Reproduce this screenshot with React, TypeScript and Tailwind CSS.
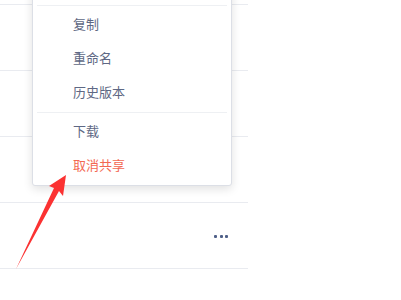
import React from 'react';

const rows = [0, 1, 2, 3, 4];

const MenuItem = ({ label, danger }: { label: string; danger?: boolean }) => (
    <div
        className={
            'h-[34px] flex items-center pl-[40px] text-[13px] ' +
            (danger ? 'text-[#f36852]' : 'text-[#5e6884]')
        }
    >
        {label}
    </div>
);

export default function App() {
    return (
        <div
            className="relative w-[401px] h-[300px] overflow-hidden bg-white"
            style={{ fontFamily: '"Noto Sans CJK SC", "Noto Sans", sans-serif' }}
        >
            {/* file list behind the menu */}
            <div className="w-[248px] mt-[-61px] flex flex-col">
                {rows.map((i) => (
                    <div key={i} className="h-[66px] border-b border-[#e9ebf0] flex items-center justify-end pr-[20px]">
                        {i === 4 && (
                            <div className="flex gap-[2.5px] mt-[1px]">
                                <span className="w-[3px] h-[3px] rounded-[1px] bg-[#4f6088]" />
                                <span className="w-[3px] h-[3px] rounded-[1px] bg-[#4f6088]" />
                                <span className="w-[3px] h-[3px] rounded-[1px] bg-[#4f6088]" />
                            </div>
                        )}
                    </div>
                ))}
            </div>

            {/* context menu */}
            <div className="absolute left-[32px] top-[-32px] w-[200px] bg-white border border-[#dcdfe6] rounded-[3px] shadow-[0_3px_10px_rgba(0,0,0,0.12)] pb-[3px]">
                <div className="h-[34px]" />
                <div className="h-px bg-[#eef0f3] mx-[4px] mt-[2px] mb-px" />
                <MenuItem label="复制" />
                <MenuItem label="重命名" />
                <MenuItem label="历史版本" />
                <div className="h-px bg-[#eef0f3] mx-[4px] mt-[3px] mb-px" />
                <MenuItem label="下载" />
                <MenuItem label="取消共享" danger />
            </div>

            {/* annotation arrow */}
            <svg className="absolute left-0 top-0" width="401" height="300" viewBox="0 0 401 300">
                <polygon
                    points="66,175 63,196 59,191 16,269 54,188 49,186"
                    fill="#fb3232"
                />
            </svg>
        </div>
    );
}
